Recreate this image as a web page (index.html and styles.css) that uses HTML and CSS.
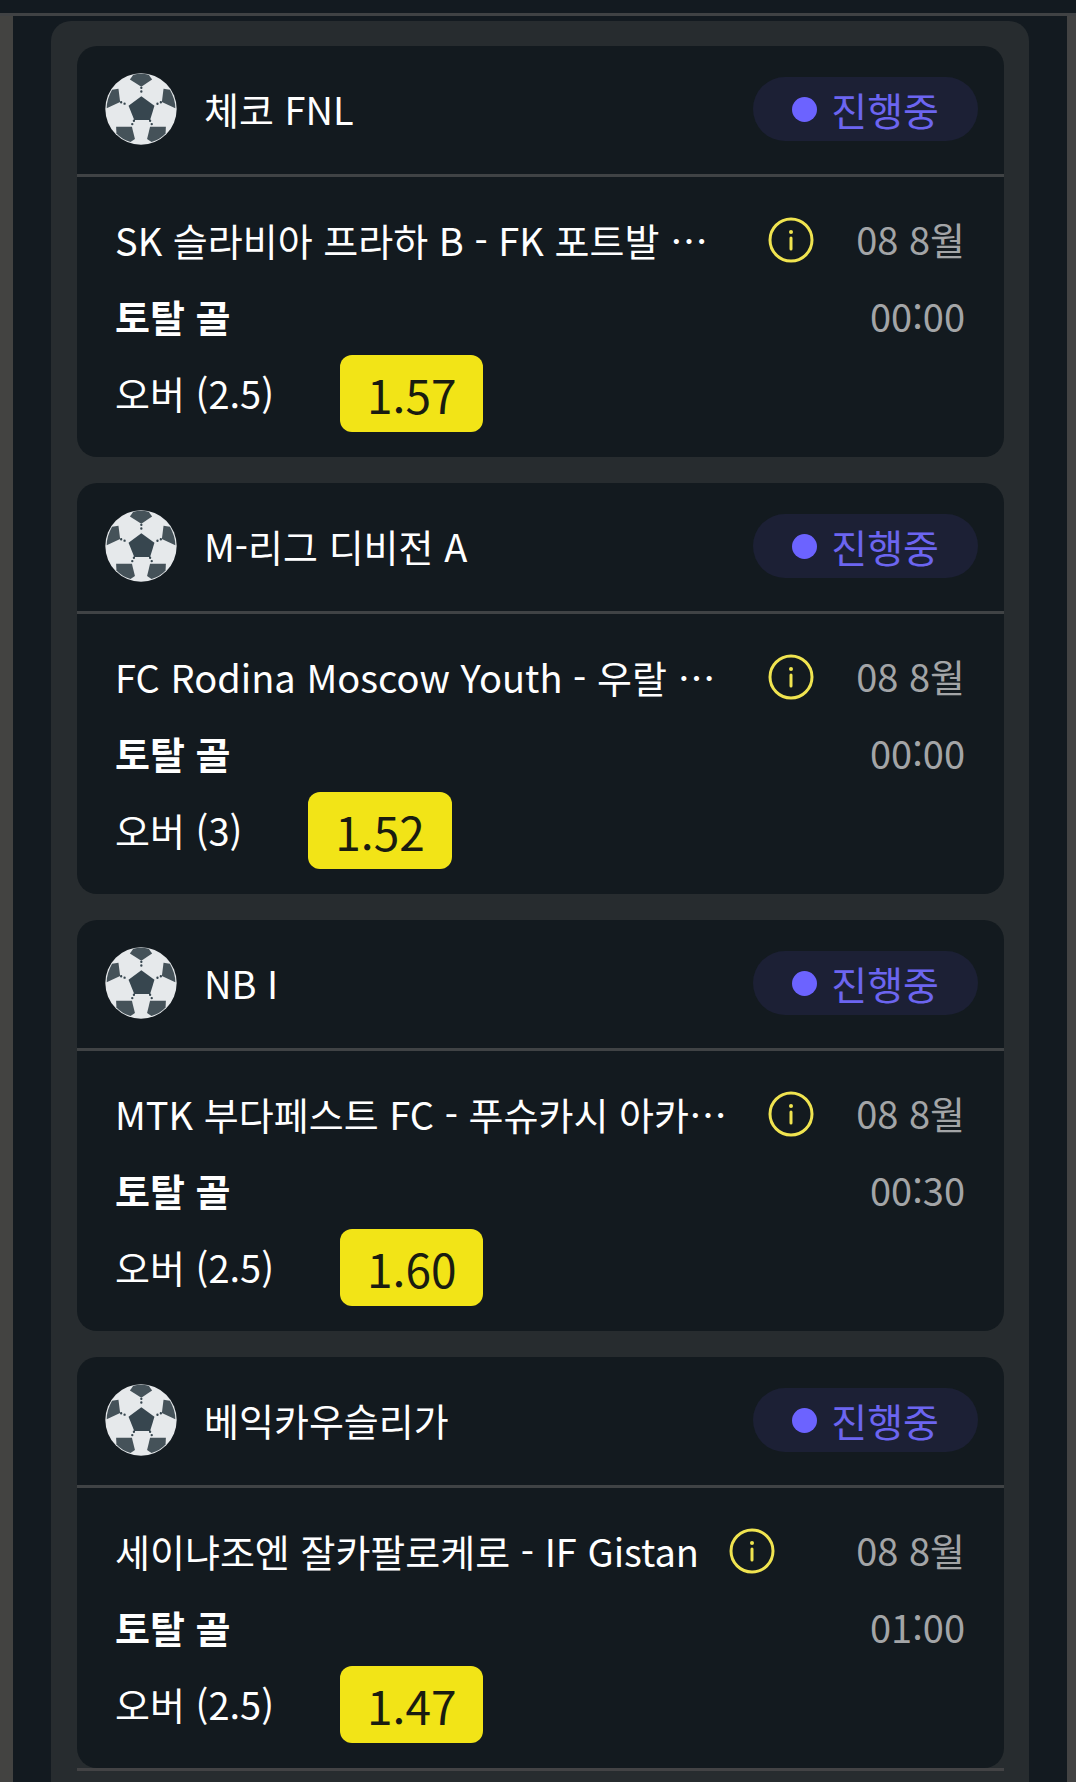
FILE: index.html
```html
<!DOCTYPE html>
<html lang="ko">
<head>
    <meta charset="UTF-8">
    <meta name="viewport" content="width=device-width, initial-scale=1.0">
    <title>진행중</title>
    <link rel="stylesheet" href="styles.css">
</head>
<body>
    <!-- Shared icons -->
    <svg class="sprite" aria-hidden="true">
        <symbol id="ball" viewBox="0 0 214 214">
            <circle cx="107" cy="107" r="106" fill="#e6e9eb"/>
            <g fill="#455259">
                <path d="M74 19 84 5Q107 0 130 5L140 19 108 41Z"/>
                <path d="M40 47 21 50Q5 78 5 105L45 86Z"/>
                <path d="M174 47 193 50Q209 78 209 105L169 86Z"/>
                <path d="M33 160H80L89 196 76 205Q50 198 34 180Z"/>
                <path d="M181 160H134L125 196 138 205Q164 198 180 180Z"/>
            </g>
            <path d="M108 69 147 97 134 140H87L70 97Z" fill="#37464f"/>
            <path d="M108 44V66M48 87 68 95M166 87 148 95M86 142 79 156M134 142 141 156" fill="none" stroke="#37464f" stroke-width="7" stroke-linecap="round" stroke-dasharray="0 11"/>
        </symbol>
        <symbol id="info" viewBox="0 0 46 46">
            <circle cx="23" cy="23" r="21" fill="none" stroke="currentColor" stroke-width="3"/>
            <circle cx="23" cy="15" r="2" fill="currentColor"/>
            <path d="M23 21V32" stroke="currentColor" stroke-width="3" stroke-linecap="round"/>
        </symbol>
    </svg>

    <div class="topbar"></div>
    <main class="page">
        <section class="bets">
            <article class="bet">
                <header class="bet-header">
                    <svg class="ball"><use href="#ball"/></svg>
                    <h2 class="league">체코 FNL</h2>
                    <span class="status">진행중</span>
                </header>
                <div class="bet-body">
                    <div class="match">
                        <span class="teams">SK 슬라비아 프라하 B - FK 포트발 프리드란트</span>
                        <button class="info" type="button" aria-label="정보"><svg><use href="#info"/></svg></button>
                    </div>
                    <span class="date">08 8월</span>
                    <strong class="market">토탈 골</strong>
                    <span class="date">00:00</span>
                    <div class="pick">
                        <span>오버 (2.5)</span>
                        <button class="odds" type="button">1.57</button>
                    </div>
                </div>
            </article>

            <article class="bet">
                <header class="bet-header">
                    <svg class="ball"><use href="#ball"/></svg>
                    <h2 class="league">M-리그 디비전 A</h2>
                    <span class="status">진행중</span>
                </header>
                <div class="bet-body">
                    <div class="match">
                        <span class="teams">FC Rodina Moscow Youth - 우랄 유소년</span>
                        <button class="info" type="button" aria-label="정보"><svg><use href="#info"/></svg></button>
                    </div>
                    <span class="date">08 8월</span>
                    <strong class="market">토탈 골</strong>
                    <span class="date">00:00</span>
                    <div class="pick">
                        <span>오버 (3)</span>
                        <button class="odds" type="button">1.52</button>
                    </div>
                </div>
            </article>

            <article class="bet">
                <header class="bet-header">
                    <svg class="ball"><use href="#ball"/></svg>
                    <h2 class="league">NB I</h2>
                    <span class="status">진행중</span>
                </header>
                <div class="bet-body">
                    <div class="match">
                        <span class="teams">MTK 부다페스트 FC - 푸슈카시 아카데미아</span>
                        <button class="info" type="button" aria-label="정보"><svg><use href="#info"/></svg></button>
                    </div>
                    <span class="date">08 8월</span>
                    <strong class="market">토탈 골</strong>
                    <span class="date">00:30</span>
                    <div class="pick">
                        <span>오버 (2.5)</span>
                        <button class="odds" type="button">1.60</button>
                    </div>
                </div>
            </article>

            <article class="bet">
                <header class="bet-header">
                    <svg class="ball"><use href="#ball"/></svg>
                    <h2 class="league">베익카우슬리가</h2>
                    <span class="status">진행중</span>
                </header>
                <div class="bet-body">
                    <div class="match">
                        <span class="teams">세이냐조엔 잘카팔로케로 - IF Gistan</span>
                        <button class="info" type="button" aria-label="정보"><svg><use href="#info"/></svg></button>
                    </div>
                    <span class="date">08 8월</span>
                    <strong class="market">토탈 골</strong>
                    <span class="date">01:00</span>
                    <div class="pick">
                        <span>오버 (2.5)</span>
                        <button class="odds" type="button">1.47</button>
                    </div>
                </div>
            </article>
            <hr class="divider">
        </section>
    </main>
</body>
</html>
```
FILE: styles.css
```css
* {
    box-sizing: border-box;
}

body {
    display: flex;
    flex-direction: column;
    min-height: 100vh;
    margin: 0;
    background: #131a20;
    color: #fff;
    font-family: "Noto Sans CJK KR", sans-serif;
    font-size: 38px;
    line-height: 76px;
}

button {
    border: 0;
    padding: 0;
    font: inherit;
    cursor: pointer;
}

.sprite {
    position: absolute;
    width: 0;
    height: 0;
}

.topbar {
    height: 16px;
    border-bottom: 3px solid #404244;
}

.page {
    display: flex;
    flex: 1;
    flex-direction: column;
    padding: 5px 38px 0;
    border-left: 13px solid #434341;
    border-right: 9px solid #434343;
}

.bets {
    flex: 1;
    padding: 25px 25px 0 26px;
    border-radius: 20px 20px 0 0;
    background: #272c2f;
}

/* Bet card */
.bet {
    border-radius: 20px;
    background: #131a1f;
}

.bet + .bet {
    margin-top: 26px;
}

.bet-header {
    display: flex;
    align-items: center;
    height: 131px;
    padding: 0 26px 2px 28px;
    border-bottom: 3px solid #404345;
}

.ball {
    flex: none;
    width: 72px;
    height: 72px;
}

.league {
    flex: 1;
    margin: 0 0 0 27px;
    font-size: inherit;
    font-weight: 400;
}

.status {
    display: flex;
    align-items: center;
    gap: 14px;
    height: 64px;
    padding: 0 39px;
    border-radius: 32px;
    background: #1c2035;
    color: #6c65f0;
    font-size: 39px;
}

.status::before {
    content: "";
    width: 25px;
    height: 25px;
    border-radius: 50%;
    background: #6c63ff;
}

.bet-body {
    display: grid;
    grid-template-columns: minmax(0, 1fr) auto;
    grid-auto-rows: 77px;
    column-gap: 42px;
    padding: 24px 39px 25px 38px;
}

.match {
    display: flex;
    align-items: center;
    gap: 30px;
}

.teams {
    overflow: hidden;
    text-overflow: ellipsis;
    white-space: nowrap;
}

.info {
    flex: none;
    width: 46px;
    height: 46px;
    background: none;
    color: #f0e450;
}

.info svg {
    display: block;
    width: 100%;
    height: 100%;
}

.date {
    color: #a3a5a7;
    text-align: right;
}

.market {
    font-weight: 700;
}

.pick {
    display: flex;
    grid-column: 1 / -1;
    gap: 66px;
}

.odds {
    height: 77px;
    padding: 0 27px;
    border-radius: 12px;
    background: #f2e417;
    color: #1a1c10;
    font-size: 46px;
}

.divider {
    height: 3px;
    margin: 0;
    border: 0;
    background: #434345;
}
```
